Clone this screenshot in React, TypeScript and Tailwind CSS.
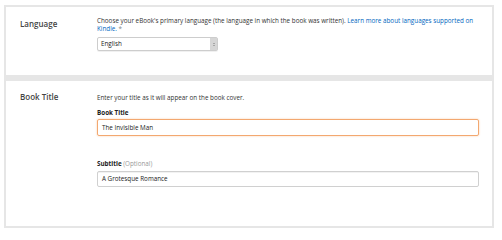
export default function App() {
  return (
    <div className="w-[502px] h-[240px] bg-white pt-[5px] pl-[4px] font-['Open_Sans',sans-serif] text-[#333]">
      <div className="w-[490px] border-2 border-[#e6e6e6]">
        {/* Language */}
        <section className="h-[68px] flex">
          <div className="w-[91px] shrink-0 pl-[14px] pt-[11px] text-[8px] leading-[12px] font-semibold text-[#444]">
            Language
          </div>
          <div className="w-[382px] pt-[10px]">
            <p className="text-[6.3px] leading-[8px]">
              Choose your eBook's primary language (the language in which the book was written).{" "}
              <span className="text-[#0066c0]">Learn more about languages supported on Kindle.</span>{" "}
              <span className="text-[#888]">*</span>
            </p>
            <div className="mt-[4px] w-[121px] h-[14px] flex border border-[#cdcdcd] rounded-[2px] bg-white shadow-[0_1px_0_rgba(0,0,0,0.06)]">
              <span className="flex-1 pl-[3px] text-[6.3px] leading-[12px] text-[#222]">English</span>
              <span className="w-[7px] bg-[#d6d6d6] flex flex-col items-center justify-center gap-[1px]">
                <span className="w-0 h-0 border-x-[1.5px] border-x-transparent border-b-[1.5px] border-b-[#777]" />
                <span className="w-0 h-0 border-x-[1.5px] border-x-transparent border-t-[1.5px] border-t-[#777]" />
              </span>
            </div>
          </div>
        </section>

        <div className="h-[6px] bg-[#e6e6e6]" />

        {/* Book Title */}
        <section className="h-[145px] flex">
          <div className="w-[91px] shrink-0 pl-[14px] pt-[10px] text-[8px] leading-[12px] font-semibold text-[#444]">
            Book Title
          </div>
          <div className="w-[382px] pt-[13px]">
            <p className="text-[6.3px] leading-[8px]">Enter your title as it will appear on the book cover.</p>
            <p className="mt-[7px] text-[6.3px] leading-[8px] font-bold text-[#222]">Book Title</p>
            <div className="mt-[2px] h-[17px] border border-[#f3a870] rounded-[2px] shadow-[0_0_2px_#f7c9a4] pl-[4px] text-[6.3px] leading-[15px] text-[#222]">
              The Invisible Man
            </div>
            <p className="mt-[24px] text-[6.3px] leading-[8px] font-bold text-[#222]">
              Subtitle <span className="font-normal text-[#999]">(Optional)</span>
            </p>
            <div className="mt-[3px] h-[16px] border border-[#d0d0d0] rounded-[2px] shadow-[inset_0_1px_0_rgba(0,0,0,0.05)] pl-[4px] text-[6.3px] leading-[14px] text-[#222]">
              A Grotesque Romance
            </div>
          </div>
        </section>
      </div>
    </div>
  );
}
